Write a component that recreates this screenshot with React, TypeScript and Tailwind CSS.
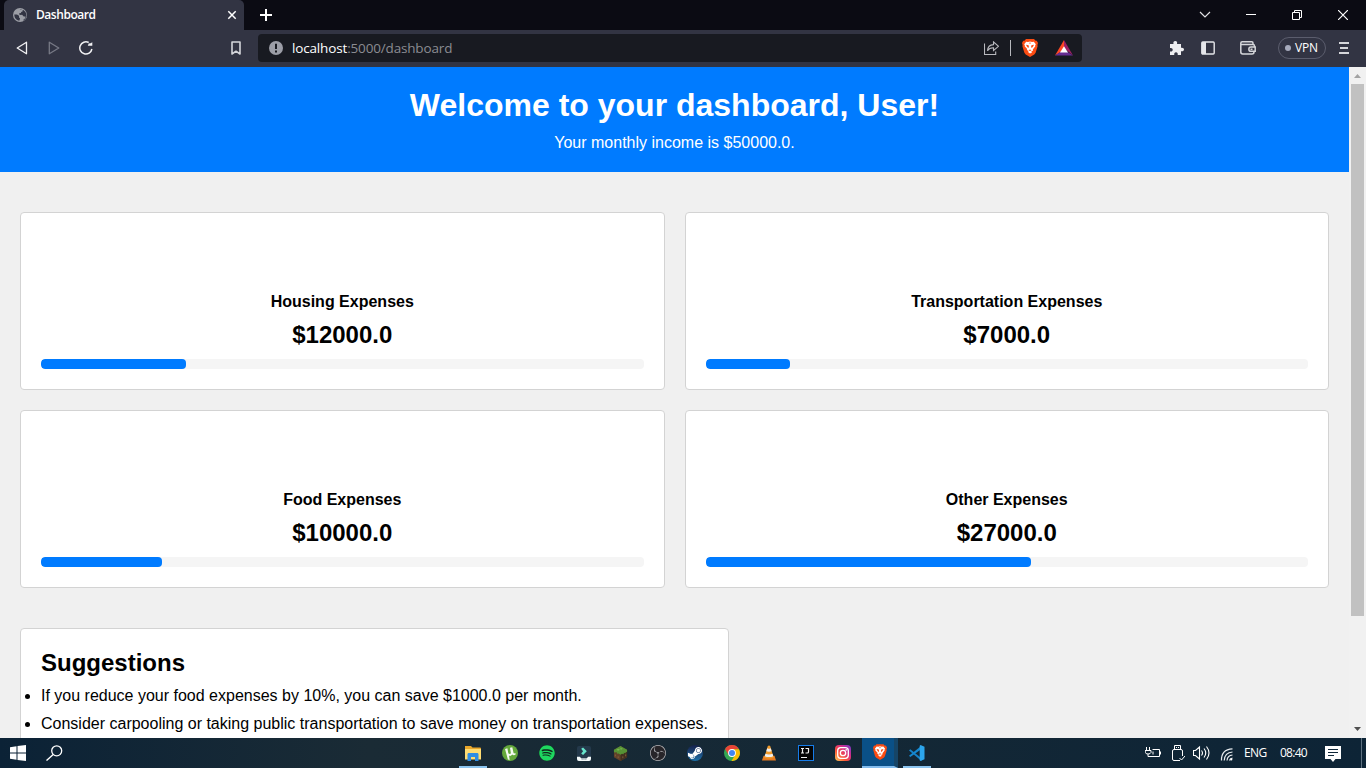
import type { ReactNode } from "react";
import { SiObsstudio } from "react-icons/si";
import { FaSpotify, FaSteamSymbol } from "react-icons/fa";

type Expense = { title: string; amount: string; percent: number };

const expenses: Expense[] = [
  { title: "Housing Expenses", amount: "$12000.0", percent: 24 },
  { title: "Transportation Expenses", amount: "$7000.0", percent: 14 },
  { title: "Food Expenses", amount: "$10000.0", percent: 20 },
  { title: "Other Expenses", amount: "$27000.0", percent: 54 },
];

const suggestions = [
  "If you reduce your food expenses by 10%, you can save $1000.0 per month.",
  "Consider carpooling or taking public transportation to save money on transportation expenses.",
];

function BraveLion({ className }: { className: string }) {
  return (
    <svg className={className} viewBox="0 0 16 18">
      <path d="M4 0h8l1.600 1.800 1.200-.1L16 4l-.6 2 .2 1.200-2 6.600L12.300 15.500 8 18l-4.300-2.500L2.400 13.800.4 7.200.6 6 0 4l1.200-2.300 1.200.1z" fill="#fb4c13" />
      <path d="M4.200 2.700 6 3l2-.5L10 3l1.800-.3 2 2.600-.7 1.200.2.800-2.500 3.100.3 1.100-1.800 1 .7 1L8 14.500l-2-1.500.7-1-1.800-1 .3-1.100L2.700 7.300l.2-.8-.7-1.200z" fill="#fff" />
      <path d="m4 5.700 2.600.5.300 1.900-.7 1L4.900 7.400zM12 5.700l-2.600.5-.3 1.900.7 1 1.300-1.700zM7 3.700h2L8 5zM6.500 11.300 8 10.500l1.500.8L8 12z" fill="#fb4c13" />
    </svg>
  );
}

function BrowserTabs() {
  return (
    <div className="flex h-[30px] bg-[#0b0b13] pl-1 text-white">
      <div className="flex w-60 items-center rounded-t-[5px] bg-[#323443] pl-[9px] pr-[7px]">
        <svg className="size-[14px] shrink-0" viewBox="0 0 14 14">
          <circle cx="7" cy="7" r="7" fill="#9b9da5" />
          <path d="M1.300 6.500 4 6.600l2 1.200v1.700l1 .7-.5 2.300c-3 0-5.200-2.500-5.200-6zM6.500 1.500l3 .2.300 1.500-1.600.7-.3 1.200-1.500.2-.5 1 1.600.8 1.600-.3 1.600 1.600 1.900.2-.4 1.600-1.800 1.500 0 1 2-1.600 1-2.600-.1-2.400-1-2.300-2-1.800-2.500-.8z" fill="#323443" />
        </svg>
        <span className="ml-[9px] text-[12px] font-semibold leading-[18px] tracking-[-0.45px]">Dashboard</span>
        <svg className="ml-auto size-[10px]" viewBox="0 0 10 10" stroke="#fff" strokeWidth="1.500"><path d="m1.300 1.300 7.400 7.400M8.700 1.300 1.300 8.700" /></svg>
      </div>
      <svg className="ml-4 mt-[9px] size-3" viewBox="0 0 12 12" stroke="#fff" strokeWidth="2"><path d="M6 0v12M0 6h12" /></svg>
      <div className="ml-auto flex h-[29px] items-center">
        <svg className="mr-[35px] h-3 w-3" viewBox="0 0 12 12" fill="none" stroke="#e2e2e5" strokeWidth="1.200"><path d="m1 3 5 5 5-5" /></svg>
        <svg className="mr-9 h-3 w-[10px]" viewBox="0 0 10 12" stroke="#fff"><path d="M0 5.500h10" /></svg>
        <svg className="mr-9 size-[10px]" viewBox="0 0 10 10" fill="none" stroke="#fff"><path d="M.5 2.500h7v7h-7zM2.500 2V.5h7v7H8" /></svg>
        <svg className="mr-[18px] size-[10px]" viewBox="0 0 10 10" stroke="#fff" strokeWidth="1.200"><path d="m0 0 10 10M10 0 0 10" /></svg>
      </div>
    </div>
  );
}

function Toolbar() {
  return (
    <div className="flex h-[37px] items-start bg-[#323443] pt-1">
      <div className="flex h-7 items-center">
        <svg className="ml-4 h-[14px] w-3" viewBox="0 0 12 14" fill="none" stroke="#f1f1f3" strokeWidth="1.300" strokeLinejoin="round"><path d="M10.500 1.200v11.600L1.200 7z" /></svg>
        <svg className="ml-5 h-[14px] w-3" viewBox="0 0 12 14" fill="none" stroke="#777985" strokeWidth="1.300" strokeLinejoin="round"><path d="M1.300 1.200v11.600L10.800 7z" /></svg>
        <svg className="ml-[19px] size-[14px]" viewBox="0 0 14 14" fill="none" stroke="#f1f1f3" strokeWidth="1.500"><path d="M9.700 1.500A6.100 6.100 0 1 0 12.900 8" /><path d="M8.800 4.800h4.500V1.300l-1.700 1-1.900.3z" fill="#f1f1f3" stroke="none" /></svg>
        <svg className="ml-[138px] h-[14px] w-[10px]" viewBox="0 0 10 14" fill="none" stroke="#d4d5da" strokeWidth="1.600" strokeLinejoin="round"><path d="M1 1h8v12L5 10.200 1 13z" /></svg>
      </div>
      <div className="ml-[17px] flex h-7 w-[824px] items-center rounded bg-[#181a21] pl-[11px] pr-[9px]">
        <svg className="size-[14px]" viewBox="0 0 14 14"><circle cx="7" cy="7" r="7" fill="#9c9ea7" /><path d="M6 2.700h2v5.400H6zM6 9.500h2v2H6z" fill="#181a21" /></svg>
        <span className="ml-[9px] text-[13.500px] leading-5 tracking-[-0.16px] text-[#8b8c92]"><span className="text-white">localhost</span>:5000/dashboard</span>
        <svg className="ml-auto h-[14px] w-[15px]" viewBox="0 0 15 14" fill="none" stroke="#b8b9be" strokeWidth="1.100"><path d="M.5 2.500v11h11.200v-3M9.500.8l5 4.500-5 4.200V6.800C6.500 6.700 4.800 7.700 3.500 9.800c.2-3.700 2.400-6 6-6.200z" /></svg>
        <span className="ml-[11px] h-4 w-px bg-[#b8b9be]" />
        <BraveLion className="ml-[11px] h-[18px] w-4" />
        <svg className="ml-[17px] h-4 w-[18px]" viewBox="0 0 18 16"><path d="M9 0 0 15.500 9 10z" fill="#ff4724" /><path d="M9 0v8l9 7.500z" fill="#9e1f63" /><path d="M0 15.500h18L9 9.500z" fill="#662d91" /><path d="M9 6.200 5 12.500h8z" fill="#fff" /></svg>
      </div>
      <div className="ml-auto flex h-7 items-center">
        <svg className="h-[14px] w-[15px]" viewBox="0 0 15 14" fill="#eeeef1"><path d="M1 3h3.500C4 1.300 4.800 0 6.300 0S8.500 1.300 8 3h4v3.800c1.600-.5 3 .3 3 1.700s-1.400 2.200-3 1.700V14H8.700c.4-1.700-.4-2.800-1.700-2.800S4.900 12.300 5.300 14H1v-3.600c1.700.4 2.700-.4 2.700-1.700S2.700 6.600 1 7z" /></svg>
        <svg className="ml-[17px] size-[14px]" viewBox="0 0 14 14"><rect x=".8" y="1" width="12.400" height="12" rx="1" fill="none" stroke="#e5e6ea" strokeWidth="1.400" /><path d="M1 1h4v12H1z" fill="#e5e6ea" /></svg>
        <svg className="ml-[25px] h-[14px] w-4" viewBox="0 0 16 14" fill="none" stroke="#d5d6da" strokeWidth="1.500"><path d="M13 3.500V2c0-.8-.4-1.200-1.200-1.200H2.200C1.300.8.8 1.300.8 2.200v8.900c0 1.200.6 1.900 1.900 1.900H12c1.300 0 2-.7 2-2M.8 3.500H13c1 0 1.500.5 1.500 1.500v1M15.200 6H11a2 2 0 0 0 0 4.300h4.200zM10.500 8.200h2" /></svg>
        <div className="ml-[22px] flex h-[22px] w-12 items-center rounded-full border border-[#5b5d6d] pl-1.5">
          <span className="size-1.5 rounded-full bg-[#a6aabc]" />
          <span className="ml-1 text-[12px] leading-4 tracking-[-0.2px] text-white">VPN</span>
        </div>
        <svg className="ml-[13px] mr-[17px] h-3 w-[10px]" viewBox="0 0 10 12" stroke="#d5d6da" strokeWidth="2"><path d="M0 1h10M1 6h8M0 11h10" /></svg>
      </div>
    </div>
  );
}

function ExpenseCard({ title, amount, percent }: Expense) {
  return (
    <section className="flex h-[178px] flex-col justify-end rounded border border-[#d3d3d3] bg-white p-5 text-center">
      <h3 className="text-base font-bold leading-[18px]">{title}</h3>
      <p className="mb-2.5 mt-2.5 text-2xl font-bold leading-7">{amount}</p>
      <div className="h-2.5 overflow-hidden rounded bg-[#f5f5f5]">
        <div className="h-full rounded bg-[#007bff]" style={{ width: `${percent}%` }} />
      </div>
    </section>
  );
}

function Scrollbar() {
  return (
    <div className="flex w-[17px] shrink-0 flex-col items-center bg-[#f1f1f1]">
      <svg className="h-[17px] w-[17px] shrink-0" viewBox="0 0 17 17"><path d="m5 11 3.500-4 3.500 4z" fill="#a3a3a3" /></svg>
      <div className="h-[532px] w-[13px] bg-[#c1c1c1]" />
      <svg className="mt-auto h-[17px] w-[17px] shrink-0" viewBox="0 0 17 17"><path d="m5 6 3.500 4L12 6z" fill="#505050" /></svg>
    </div>
  );
}

type TaskbarApp = { icon: ReactNode; open?: boolean; active?: boolean };

const apps: TaskbarApp[] = [
  { open: true, icon: <svg className="h-4 w-[18px]" viewBox="0 0 18 16"><path d="M1 1h6l1.500 1.500H16a1 1 0 0 1 1 1V14H1z" fill="#e9a72b" /><path d="M1 4h16v10.500H1z" fill="#ffdc72" /><path d="M3.500 9.500c0-1 .5-1.500 1.500-1.500h8c1 0 1.500.5 1.500 1.500V16H11v-4H7v4H3.500z" fill="#2f8de4" /></svg> },
  { icon: <svg className="size-4" viewBox="0 0 16 16"><circle cx="8" cy="8" r="8" fill="#64a83b" /><path d="m3 4 2.400-.7.900 4.600c.4 1.500 2.400 1.200 2.500-.2L8 2.800l2.300-.6 1.200 5.600c.3.900 1 .9 1.700.3l.6 1.200c-1.300 1.400-2.700 1.300-3.600.2-.8 1.400-2.200 1.700-3.200 1.100l.7 4.400-1.800-.4z" fill="#f5faf1" /></svg> },
  { icon: <span className="flex size-4 rounded-full bg-[#11271c]"><FaSpotify className="size-4 text-[#1ed760]" /></span> },
  { icon: <svg className="h-[15px] w-[14px]" viewBox="0 0 15 16"><rect width="15" height="16" rx="2" fill="#24394b" /><path d="m4.500 3 2-1.300 4 3.900-4 4L4.500 8l2-2.500z" fill="#67e5cc" /><path d="M0 11.500h3l1.500 1.500h6l1.500-1.500h3V14a2 2 0 0 1-2 2H2a2 2 0 0 1-2-2z" fill="#f4fafa" /><path d="M5 14h1M7 14h1M9 14h1" stroke="#334c5c" /></svg> },
  { icon: <svg className="size-[15px]" viewBox="0 0 15 16"><path d="m.5 4 7-4 7 4v8l-7 4-7-4z" fill="#624229" /><path d="m7.500 8 7-4v8l-7 4z" fill="#42301f" /><path d="m.5 4 7-4 7 4v2l-1.500.7v1l-2-.4v1.500l-2-.6-1.500 1-2-1.300-1.500.3-.5-1.500L1 7 .5 6z" fill="#579335" /><path d="m3 4 2-1 2 1-2 1zM8 2l2 1-2 1-1-1z" fill="#78b450" /><path d="M2 9v2M5 11v2M10 11v2M13 9v2" stroke="#83603e" /></svg> },
  { icon: <span className="flex size-4 items-center justify-center rounded-full bg-[#272529]"><SiObsstudio className="size-4 text-[#b5b6ba]" /></span> },
  { icon: <span className="flex size-4 items-center justify-center overflow-hidden rounded-full bg-linear-to-b from-[#14204a] to-[#1b70a8]"><FaSteamSymbol className="size-4 text-white" /></span> },
  { icon: <svg className="size-4" viewBox="0 0 16 16"><circle cx="8" cy="8" r="8" fill="#34a853" /><path d="M1.100 4A8 8 0 0 1 15 4.300H8L4.600 10z" fill="#ea4335" /><path d="M15 4.300A8 8 0 0 1 7.500 16l3.800-6.200L8 4.300z" fill="#fbbc05" /><circle cx="8" cy="8" r="3.900" fill="#fff" /><circle cx="8" cy="8" r="3" fill="#4285f4" /></svg> },
  { icon: <svg className="h-4 w-[14px]" viewBox="0 0 15 16"><path d="m0 16 1.600-5h11.800l1.600 5z" fill="#e77b20" /><path d="m6.200.5 1.300-.5 1.300.5 3.700 12.300c-2.500 1.600-7.500 1.600-10 0z" fill="#f29a28" /><path d="m5.600 3 1 .4h1.800l1-.4 1 3.200q-2.900 1-5.800 0zM3.700 8.900q3.800 1.300 7.600 0l.8 2.500q-4.600 2-9.200 0z" fill="#eee" /></svg> },
  { icon: <svg className="size-4" viewBox="0 0 16 16"><rect x=".5" y=".5" width="15" height="15" fill="#050505" stroke="#167ce9" /><path d="M3 3.500h3M4.500 3v5M3 8h3M7.500 3.500h3V7q0 1-1.200 1H7.500M3 12.500h6" fill="none" stroke="#eee" strokeWidth="1.200" /></svg> },
  { icon: <svg className="size-4" viewBox="0 0 16 16"><defs><linearGradient id="insta" x1="0" y1="1" x2="1" y2="0"><stop stopColor="#ffd15a" /><stop offset=".35" stopColor="#fa5437" /><stop offset=".65" stopColor="#d52e86" /><stop offset="1" stopColor="#7039d1" /></linearGradient></defs><rect width="16" height="16" rx="4" fill="url(#insta)" /><g fill="none" stroke="#fff" strokeWidth="1.300"><rect x="2.700" y="2.700" width="10.600" height="10.600" rx="3" /><circle cx="8" cy="8" r="2.700" /></g><circle cx="11.200" cy="4.900" r=".8" fill="#fff" /></svg> },
  { active: true, icon: <BraveLion className="ml-1 h-4 w-[14px]" /> },
  { open: true, icon: <svg className="size-4" viewBox="0 0 16 16"><path d="m1.300 4.200 11.200 9.100V16L0 5.500z" fill="#1682c7" /><path d="m0 10.700 12.500-10v3.200L1.300 12z" fill="#1587cf" /><path d="m11.500 0 4 1.800v12.400l-4 1.800-.8-.8V.8z" fill="#2ca6ee" /></svg> },
];

function Taskbar() {
  return (
    <footer className="flex h-[30px] shrink-0 bg-linear-to-r from-[#0b2236] via-[#1a2b35] via-27% to-[#0d2436] text-white">
      <div className="flex w-[454px] items-center">
        <svg className="ml-[10px] size-4" viewBox="0 0 16 16" fill="#fff"><path d="m0 2.200 6.500-.9v6.200H0zM7.500 1.100 16 0v7.500H7.500zM0 8.500h6.500v6.200L0 13.800zM7.500 8.500H16V16l-8.500-1.100z" /></svg>
        <svg className="ml-5 h-4 w-[17px]" viewBox="0 0 17 16" fill="none" stroke="#fff" strokeWidth="1.300"><circle cx="10.700" cy="5.800" r="5" /><path d="M7.200 9.400.5 15.600" /></svg>
      </div>
      <div className="flex">
        {apps.map((app, i) => (
          <div key={i} className="flex w-[37px] justify-center">
            <div className={`flex h-full items-center justify-center ${app.active ? "w-9 border-b-2 border-r-4 border-b-[#83bced] border-r-[#164567] bg-[#0a5087]" : app.open ? "w-7 border-b-2 border-[#8bc4ef] pt-0.5" : "w-7"}`}>
              {app.icon}
            </div>
          </div>
        ))}
      </div>
      <div className="ml-auto flex items-center">
        <svg className="h-3 w-4" viewBox="0 0 16 12" fill="none" stroke="#fff"><path d="M7.500 2.500h7v7h-8M15.500 4.500v3M1.500 0v3M4.500 0v3M0 3.500h6v2Q5.500 7 3 7 .5 7 .5 5.500zM3 7v2.500h4M8 4.500v3" /></svg>
        <svg className="ml-[11px] h-4 w-[13px]" viewBox="0 0 13 16" fill="none" stroke="#fff"><path d="M2.500 4.500v-4h6v4M8 15.500H2q-1.500 0-1.500-1.500V6Q.5 4.500 2 4.500h7q1.500 0 1.500 1.500v5M4 2.500h1M6 2.500h1M7.500 13l2 2L13 11" /></svg>
        <svg className="ml-[8px] h-4 w-[17px]" viewBox="0 0 17 16" fill="none" stroke="#fff" strokeWidth="1.100"><path d="M.5 5.500h2L6.500 2v12l-4-3.500h-2zM8.500 5.500q2 2.500 0 5M11 3.500q3.500 4.500 0 9M13.500 1.500q5 6.500 0 13" /></svg>
        <svg className="ml-[10px] mt-0.5 h-[13px] w-[13px]" viewBox="0 0 13 13" fill="none" stroke="#e8ecef" strokeWidth="1.200"><path d="M1.500 12.500Q1 1.500 12.500.8M4.200 12.500q.5-8 8.300-8.500M7 12.500q.4-5 5.500-5.500" /><path d="M9.500 12.500q.5-2 3-2.500" /><circle cx="11.300" cy="11.400" r="1.100" fill="#fff" stroke="none" /></svg>
        <span className="ml-[11px] w-[25px] whitespace-nowrap text-[12px] leading-4 tracking-[-0.55px]">ENG</span>
        <span className="ml-[11px] w-[29px] whitespace-nowrap text-[12px] leading-4 tracking-[-0.75px]">08:40</span>
        <svg className="ml-[16px] mt-px h-4 w-4" viewBox="0 0 16 16"><path d="M0 0h16v13h-5.500L8 16l-2.500-3H0z" fill="#fff" /><path d="M3 3.500h10M3 6.500h10M3 9.500h6" stroke="#10283a" /></svg>
        <span className="ml-5 mr-1 h-[30px] w-px bg-[#5e7180]" />
      </div>
    </footer>
  );
}

export default function App() {
  return (
    <div className="flex h-screen w-full flex-col overflow-hidden bg-[#f0f0f0] font-['Open_Sans','Noto_Sans',sans-serif]">
      <BrowserTabs />
      <Toolbar />
      <div className="flex min-h-0 flex-1">
        <main className="min-w-0 flex-1 overflow-hidden bg-[#f0f0f0] font-['Liberation_Sans',sans-serif] text-black">
          <header className="h-[105px] bg-[#007bff] pt-5 text-center text-white">
            <h1 className="text-[32px] font-bold leading-9">Welcome to your dashboard, User!</h1>
            <p className="mt-[11px] text-base leading-[18px]">Your monthly income is $50000.0.</p>
          </header>
          <div className="grid grid-cols-2 gap-5 px-5 py-10">
            {expenses.map((expense) => <ExpenseCard key={expense.title} {...expense} />)}
          </div>
          <section className="mx-5 h-[180px] w-[709px] rounded border border-[#d3d3d3] bg-white p-5">
            <h2 className="text-2xl font-bold leading-7">Suggestions</h2>
            <ul className="mt-2.5 list-disc">
              {suggestions.map((text) => <li key={text} className="mb-2.5 whitespace-nowrap text-base leading-[18px]">{text}</li>)}
            </ul>
          </section>
        </main>
        <Scrollbar />
      </div>
      <Taskbar />
    </div>
  );
}
